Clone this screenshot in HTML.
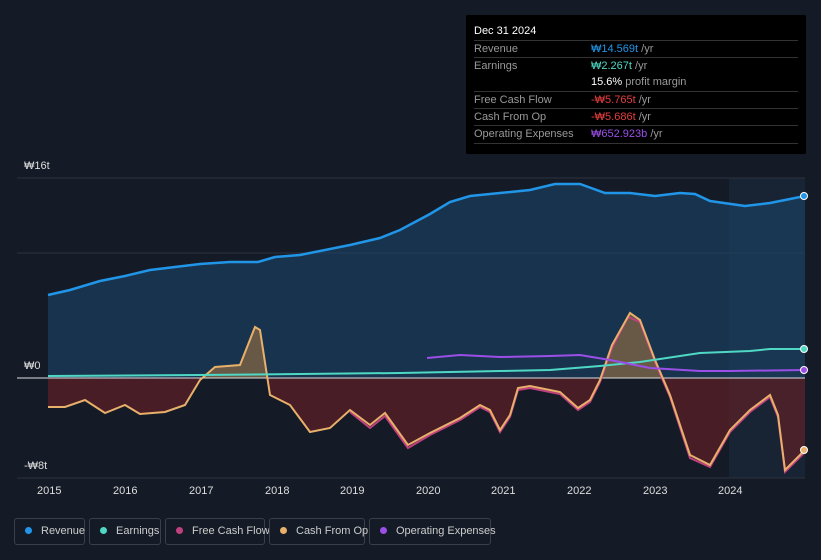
<html><head><style>
body{margin:0;width:821px;height:560px;background:#151b26;font-family:"Liberation Sans",sans-serif;overflow:hidden;position:relative;color:#ccc}
.tip{position:absolute;left:466px;top:15px;width:340px;height:139px;background:#000;border-radius:2px;font-size:11px}
.tip .h{position:absolute;left:8px;top:10px;color:#fff;font-size:11px}
.row{position:absolute;left:8px;width:324px;border-top:1px solid #333;height:17px;line-height:17px;color:#999}
.row span{position:absolute;left:117px}
.lg{position:absolute;top:518px;height:27px;border:1px solid #3a3f4a;border-radius:3px;font-size:11px;color:#ccc;line-height:25px;box-sizing:border-box;white-space:nowrap}
.lg i{display:inline-block;width:7px;height:7px;border-radius:50%;margin:0 9px 0 10px;vertical-align:0px}
.yl{position:absolute;left:24px;font-size:11px;color:#ddd}
.xl{position:absolute;top:485px;font-size:11px;color:#ddd}
</style></head><body>
<svg width="821" height="560" style="position:absolute;left:0;top:0">
<defs>
<clipPath id="up"><rect x="0" y="0" width="821" height="378"/></clipPath>
<clipPath id="dn"><rect x="0" y="378" width="821" height="200"/></clipPath>
</defs>
<rect x="729" y="178" width="76" height="300" fill="#1a2a3c" opacity=".6"/>
<line x1="17" y1="178" x2="805" y2="178" stroke="#2c3340"/>
<line x1="17" y1="253" x2="805" y2="253" stroke="#2c3340"/>
<line x1="17" y1="478" x2="805" y2="478" stroke="#2c3340"/>
<path d="M48,295 L70,290 100,281 125,276 150,270 200,264 230,262 258,262 275,257 300,255 350,245 380,238 400,230 430,214 450,202 470,196 500,193 530,190 555,184 580,184 605,193 630,193 655,196 680,193 695,194 710,201 745,206 770,203 805,196 L805,378 48,378Z" fill="#1b4468" opacity=".6"/>
<path clip-path="url(#up)" d="M48,407 65,407 85,400 105,413 125,405 140,414 165,412 185,405 200,380 215,367 240,365 255,327 260,330 270,395 290,405 310,432 330,428 350,410 370,425 385,413 408,445 430,433 460,418 480,405 490,410 500,430 510,415 518,388 530,386 560,392 578,408 590,400 600,380 612,345 630,313 640,320 655,360 670,395 690,455 710,465 730,430 750,410 770,395 778,415 785,470 800,455 805,449 805,378 48,378Z" fill="#8a6a45" opacity=".7"/>
<path clip-path="url(#dn)" d="M48,407 65,407 85,400 105,413 125,405 140,414 165,412 185,405 200,380 215,367 240,365 255,327 260,330 270,395 290,405 310,432 330,428 350,410 370,425 385,413 408,445 430,433 460,418 480,405 490,410 500,430 510,415 518,388 530,386 560,392 578,408 590,400 600,380 612,345 630,313 640,320 655,360 670,395 690,455 710,465 730,430 750,410 770,395 778,415 785,470 800,455 805,449 805,378 48,378Z" fill="#6a2026" opacity=".6"/>
<line x1="17" y1="378" x2="805" y2="378" stroke="#ddd" stroke-width="1"/>
<polyline fill="none" stroke="#c0407f" stroke-width="2" points="350,412 370,428 385,416 408,448 430,435 460,420 480,407 490,412 500,432 510,417 518,390 530,388 560,394 578,410 590,402 600,382 612,348 628,317 640,322 655,362 670,397 690,458 710,467 730,432 750,412 770,397 778,417 785,472 800,457 805,452"/>
<polyline fill="none" stroke="#e8b06a" stroke-width="2" points="48,407 65,407 85,400 105,413 125,405 140,414 165,412 185,405 200,380 215,367 240,365 255,327 260,330 270,395 290,405 310,432 330,428 350,410 370,425 385,413 408,445 430,433 460,418 480,405 490,410 500,430 510,415 518,388 530,386 560,392 578,408 590,400 600,380 612,345 630,313 640,320 655,360 670,395 690,455 710,465 730,430 750,410 770,395 778,415 785,470 800,455 805,449"/>
<polyline fill="none" stroke="#4fd8c4" stroke-width="2" points="48,376 200,375 300,374 400,373 500,371 550,370 600,366 640,362 700,353 750,351 770,349 805,349"/>
<polyline fill="none" stroke="#9b4fe8" stroke-width="2" points="427,358 460,355 500,357 550,356 580,355 610,360 650,368 700,371 730,371 805,370"/>
<polyline fill="none" stroke="#2196e8" stroke-width="2.5" points="48,295 70,290 100,281 125,276 150,270 200,264 230,262 258,262 275,257 300,255 350,245 380,238 400,230 430,214 450,202 470,196 500,193 530,190 555,184 580,184 605,193 630,193 655,196 680,193 695,194 710,201 745,206 770,203 805,196"/>
<circle cx="804" cy="196" r="3.5" fill="#2196e8" stroke="#fff"/>
<circle cx="804" cy="349" r="3.5" fill="#4fd8c4" stroke="#fff"/>
<circle cx="804" cy="370" r="3.5" fill="#9b4fe8" stroke="#fff"/>
<circle cx="804" cy="450" r="3.5" fill="#e8b06a" stroke="#fff"/>
</svg>
<div class="yl" style="top:160px">₩16t</div>
<div class="yl" style="top:360px">₩0</div>
<div class="yl" style="top:460px">-₩8t</div>
<div class="xl" style="left:37px">2015</div><div class="xl" style="left:113px">2016</div><div class="xl" style="left:189px">2017</div><div class="xl" style="left:265px">2018</div><div class="xl" style="left:340px">2019</div><div class="xl" style="left:416px">2020</div><div class="xl" style="left:491px">2021</div><div class="xl" style="left:567px">2022</div><div class="xl" style="left:643px">2023</div><div class="xl" style="left:718px">2024</div>
<div class="tip"><div class="h">Dec 31 2024</div>
<div class="row" style="top:25px">Revenue<span style="color:#2196e8">₩14.569t <b style="color:#999;font-weight:normal">/yr</b></span></div>
<div class="row" style="top:42px">Earnings<span style="color:#4fd8c4">₩2.267t <b style="color:#999;font-weight:normal">/yr</b></span></div>
<div class="row" style="top:59px;border:none"><span style="color:#fff">15.6% <b style="color:#999;font-weight:normal">profit margin</b></span></div>
<div class="row" style="top:76px">Free Cash Flow<span style="color:#e53e3e">-₩5.765t <b style="color:#999;font-weight:normal">/yr</b></span></div>
<div class="row" style="top:93px">Cash From Op<span style="color:#e53e3e">-₩5.686t <b style="color:#999;font-weight:normal">/yr</b></span></div>
<div class="row" style="top:110px;border-bottom:1px solid #333">Operating Expenses<span style="color:#9b4fe8">₩652.923b <b style="color:#999;font-weight:normal">/yr</b></span></div>
</div>
<div class="lg" style="left:14px;width:71px"><i style="background:#2196e8"></i>Revenue</div>
<div class="lg" style="left:89px;width:72px"><i style="background:#4fd8c4"></i>Earnings</div>
<div class="lg" style="left:165px;width:100px"><i style="background:#c0407f"></i>Free Cash Flow</div>
<div class="lg" style="left:269px;width:96px"><i style="background:#e8b06a"></i>Cash From Op</div>
<div class="lg" style="left:369px;width:122px"><i style="background:#9b4fe8"></i>Operating Expenses</div>
</body></html>
